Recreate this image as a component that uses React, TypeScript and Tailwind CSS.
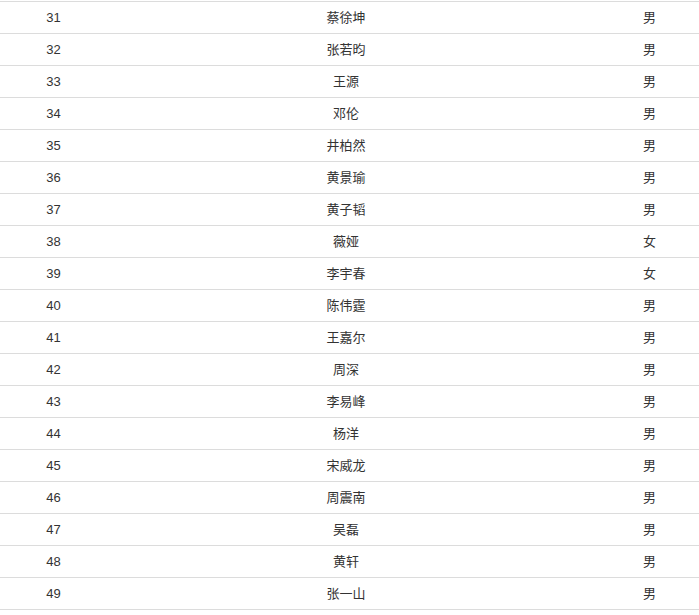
const rows: Array<[number, string, string]> = [
  [31, '蔡徐坤', '男'],
  [32, '张若昀', '男'],
  [33, '王源', '男'],
  [34, '邓伦', '男'],
  [35, '井柏然', '男'],
  [36, '黄景瑜', '男'],
  [37, '黄子韬', '男'],
  [38, '薇娅', '女'],
  [39, '李宇春', '女'],
  [40, '陈伟霆', '男'],
  [41, '王嘉尔', '男'],
  [42, '周深', '男'],
  [43, '李易峰', '男'],
  [44, '杨洋', '男'],
  [45, '宋威龙', '男'],
  [46, '周震南', '男'],
  [47, '吴磊', '男'],
  [48, '黄轩', '男'],
  [49, '张一山', '男'],
];

export default function App() {
  return (
    <div className="w-[699px] h-[615px] overflow-hidden bg-white pt-px">
      <div
        className="w-[714px] border-t border-[#dcdcdc] text-[13px] text-[#333]"
        style={{ fontFamily: '"Liberation Sans", "Noto Sans CJK SC", sans-serif' }}
      >
        {rows.map(([num, name, sex]) => (
          <div
            key={num}
            className="grid grid-cols-[107px_478px_129px] h-[32px] items-center border-b border-[#dcdcdc] text-center"
          >
            <div>{num}</div>
            <div>{name}</div>
            <div>{sex}</div>
          </div>
        ))}
      </div>
    </div>
  );
}
